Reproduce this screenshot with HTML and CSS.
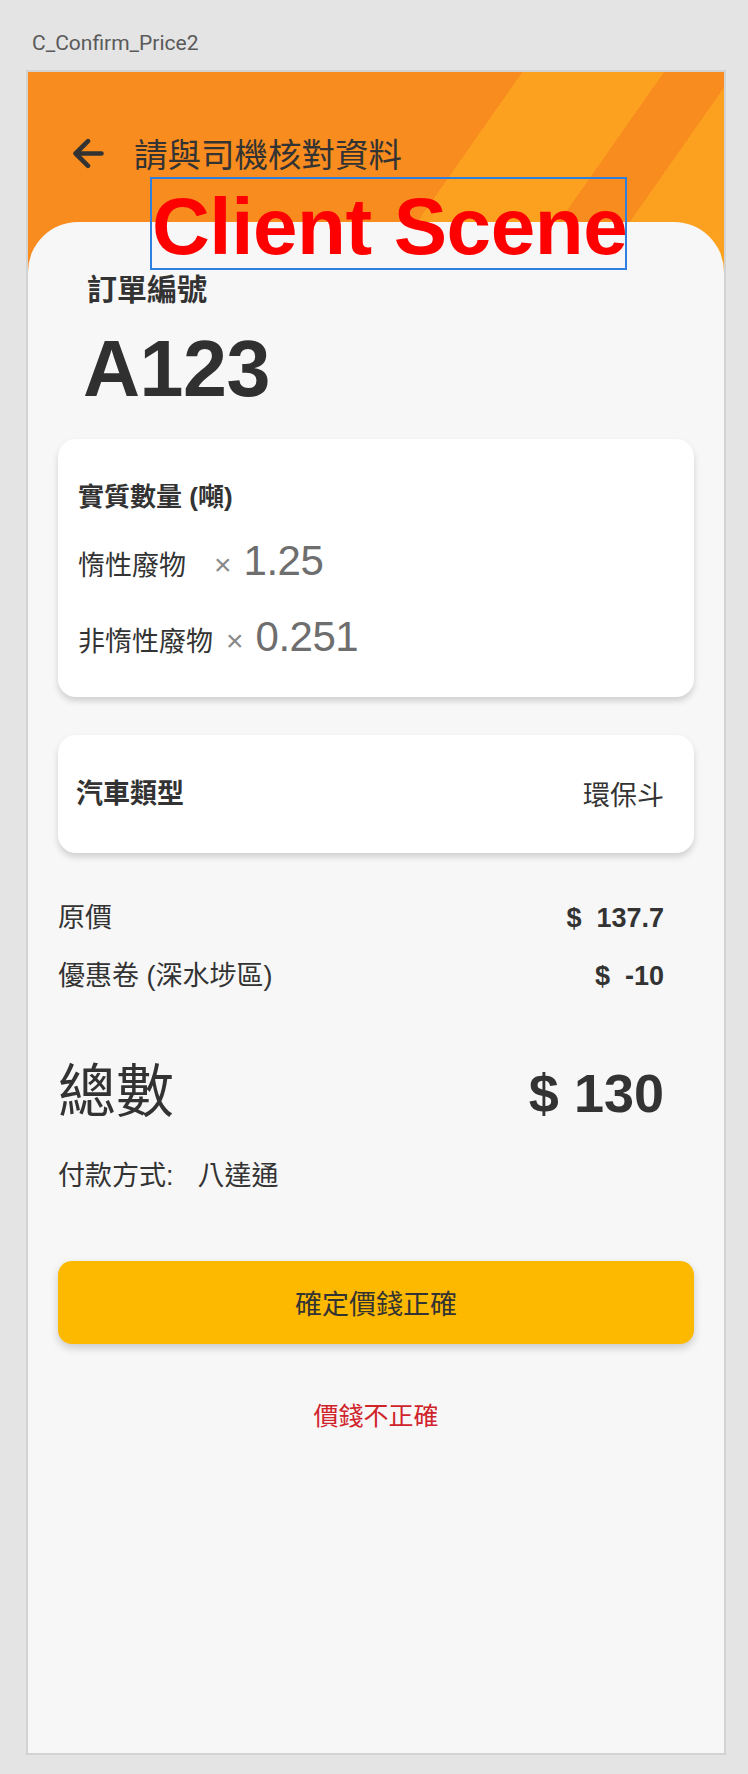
FILE: index.html
```html
<!DOCTYPE html>
<html lang="zh-Hant">
<head>
<meta charset="utf-8">
<title>C_Confirm_Price2</title>
<link rel="stylesheet" href="styles.css">
</head>
<body>
<div class="caption">C_Confirm_Price2</div>
<div class="frame">
  <div class="header">
    <div class="nav">
      <svg class="back" width="31" height="31" viewBox="0 0 31 31" aria-hidden="true">
        <path d="M28.5 15.5 H3 M15 3.2 L2.6 15.5 L15 27.8" fill="none" stroke="#333" stroke-width="4.6" stroke-linecap="round" stroke-linejoin="round"/>
      </svg>
      <span class="nav-title">請與司機核對資料</span>
    </div>
  </div>
  <div class="badge">Client Scene</div>
  <div class="panel">
    <div class="order-label">訂單編號</div>
    <div class="order-no">A123</div>

    <div class="card qty-card">
      <div class="qty-title">實質數量 (噸)</div>
      <div class="qty-row qty-row-1"><span class="qty-name wide">惰性廢物</span><span class="times">×</span><span class="qty-num">1.25</span></div>
      <div class="qty-row qty-row-2"><span class="qty-name">非惰性廢物</span><span class="times">×</span><span class="qty-num">0.251</span></div>
    </div>

    <div class="card car-card">
      <span class="car-label">汽車類型</span>
      <span class="car-value">環保斗</span>
    </div>

    <div class="price-row row-orig"><span>原價</span><span class="price-val">$&nbsp;&nbsp;137.7</span></div>
    <div class="price-row row-coupon"><span>優惠卷 (深水埗區)</span><span class="price-val">$&nbsp;&nbsp;-10</span></div>

    <div class="total-row"><span class="total-label">總數</span><span class="total-val">$ 130</span></div>
    <div class="pay">付款方式:<span class="pay-method">八達通</span></div>

    <div class="confirm-btn">確定價錢正確</div>
    <div class="reject">價錢不正確</div>
  </div>
</div>
</body>
</html>
```
FILE: styles.css
```css
* { box-sizing: border-box; }

html, body {
  margin: 0;
  padding: 0;
}

body {
  width: 748px;
  height: 1774px;
  background: #e4e4e4;
  font-family: "Liberation Sans", "Noto Sans CJK TC", sans-serif;
  color: #333;
  overflow: hidden;
}

.caption {
  height: 70px;
  padding: 30px 0 0 32px;
  font-family: Roboto, "Liberation Sans", sans-serif;
  font-size: 21px;
  line-height: 26px;
  color: #5a5a5a;
}

.frame {
  position: relative;
  margin-left: 26px;
  width: 700px;
  height: 1685px;
  border: 2px solid #d3d3d3;
  display: flex;
  flex-direction: column;
  overflow: hidden;
  background: #f7f7f7;
}

.header {
  height: 200px;
  flex: none;
  padding-top: 61px;
  background: linear-gradient(125deg,
    #f98c1e 0, #f98c1e 405px,
    #fba11f 405px, #fba11f 521px,
    #f98c1e 521px, #f98c1e 579px,
    #fba11f 579px);
}

.nav {
  display: flex;
  align-items: center;
  height: 40px;
  padding-left: 45px;
}

.back { flex: none; display: block; }

.nav-title {
  margin-left: 30px;
  font-family: "Noto Sans CJK TC", sans-serif;
  font-size: 33.5px;
  line-height: 40px;
  color: #333;
}

.badge {
  position: absolute;
  left: 122px;
  top: 105px;
  width: 477px;
  height: 93px;
  border: 2px solid #2d7fe0;
  z-index: 2;
  color: #ff0000;
  font-family: "Liberation Sans", sans-serif;
  font-weight: bold;
  font-size: 80px;
  line-height: 89px;
  padding-top: 3px;
  text-align: center;
  letter-spacing: -0.4px;
  white-space: nowrap;
}

.panel {
  position: relative;
  z-index: 1;
  flex: 1;
  margin-top: -50px;
  background: #f7f7f7;
  border-radius: 50px 50px 0 0;
  display: flex;
  flex-direction: column;
}

.order-label {
  margin: 45px 0 0 59px;
  font-family: "Noto Sans CJK TC", sans-serif;
  font-weight: bold;
  font-size: 30px;
  line-height: 40px;
}

.order-no {
  margin: 22px 0 0 55px;
  font-weight: bold;
  font-size: 79px;
  line-height: 80px;
  letter-spacing: -0.5px;
  color: #303030;
}

.card {
  margin: 30px 30px 0 30px;
  background: #fff;
  border-radius: 18px;
  box-shadow: 0 4px 6px rgba(0, 0, 0, 0.16);
}

.qty-card {
  height: 258px;
  padding: 38px 20px 0 20px;
}

.qty-title {
  font-weight: bold;
  font-size: 26px;
  line-height: 40px;
}

.qty-row {
  display: flex;
  align-items: baseline;
  height: 50px;
  line-height: 50px;
}

.qty-row-1 { margin-top: 19px; }
.qty-row-2 { margin-top: 26px; }

.qty-name {
  font-size: 27px;
  color: #333;
}

.qty-name.wide { padding-right: 15px; }

.times {
  margin: 0 12px 0 13px;
  font-size: 30px;
  color: #8a8a8a;
}

.qty-num {
  font-size: 42px;
  color: #6e6e6e;
  letter-spacing: -0.5px;
}

.car-card {
  margin-top: 38px;
  height: 118px;
  padding: 0 30px 0 18px;
  display: flex;
  align-items: center;
  justify-content: space-between;
  font-size: 27px;
  line-height: 40px;
}

.car-label { font-weight: bold; }
.car-value { position: relative; top: 2px; }

.price-row {
  display: flex;
  justify-content: space-between;
  align-items: baseline;
  margin: 0 60px 0 30px;
  font-size: 27px;
  line-height: 40px;
}

.row-orig { margin-top: 45px; }
.row-coupon { margin-top: 18px; }

.price-val {
  font-weight: bold;
  font-size: 27px;
}

.total-row {
  display: flex;
  justify-content: space-between;
  align-items: baseline;
  margin: 61px 60px 0 30px;
  line-height: 70px;
}

.total-label {
  font-size: 58px;
}

.total-val {
  font-weight: bold;
  font-size: 54px;
}

.pay {
  margin: 28px 0 0 30px;
  font-size: 27px;
  line-height: 40px;
}

.pay-method { margin-left: 24px; }

.confirm-btn {
  margin: 65px 30px 0 30px;
  height: 83px;
  background: #fdb800;
  border-radius: 14px;
  box-shadow: 0 4px 8px rgba(0, 0, 0, 0.18);
  display: flex;
  align-items: center;
  justify-content: center;
  font-size: 27px;
  color: #333;
}

.reject {
  margin-top: 52px;
  text-align: center;
  font-size: 25px;
  line-height: 40px;
  color: #d0232b;
}
```
